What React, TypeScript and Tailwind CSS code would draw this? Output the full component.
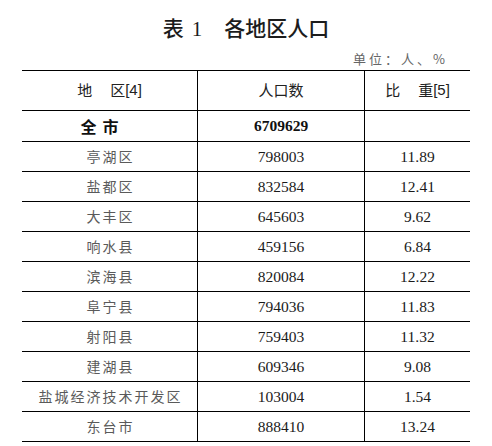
const rows: [string, string, string][] = [
  ["亭湖区", "798003", "11.89"],
  ["盐都区", "832584", "12.41"],
  ["大丰区", "645603", "9.62"],
  ["响水县", "459156", "6.84"],
  ["滨海县", "820084", "12.22"],
  ["阜宁县", "794036", "11.83"],
  ["射阳县", "759403", "11.32"],
  ["建湖县", "609346", "9.08"],
  ["盐城经济技术开发区", "103004", "1.54"],
  ["东台市", "888410", "13.24"],
];

const cjk = "font-['Noto_Sans_CJK_SC',sans-serif]";
const serif = "font-['Liberation_Serif','Noto_Sans_CJK_SC',serif]";
const grid = "grid grid-cols-[175px_167px_106px] border-b border-black";

export default function App() {
  return (
    <div className="h-[446px] w-[492px] bg-white px-[22px]">
      <h1
        className={`mt-[14px] text-center text-[21px] leading-[26px] font-medium text-[#1c1c1c] ${cjk}`}
      >
        表<span className={`ml-[8px] mr-[22px] font-normal ${serif}`}>1</span>各地区人口
      </h1>
      <div
        className={`mt-[9px] pr-[22px] text-right text-[13px] leading-[16px] tracking-[3px] text-[#666] ${cjk}`}
      >
        单位：人、%
      </div>

      <div className="mt-[3px] border-t border-black">
        {/* 表头 */}
        <div className={`${grid} h-[40px] text-[15px] text-[#222]`}>
          <div className={`flex items-center justify-center ${cjk}`}>
            地<span className="w-[18px]" />区<span className="font-['Liberation_Sans',sans-serif]">[4]</span>
          </div>
          <div className={`flex items-center justify-center border-l border-black ${cjk}`}>人口数</div>
          <div className={`flex items-center justify-center border-l border-black ${cjk}`}>
            比<span className="w-[18px]" />重<span className="font-['Liberation_Sans',sans-serif]">[5]</span>
          </div>
        </div>

        {/* 全市 */}
        <div className={`${grid} h-[31px] text-[#111]`}>
          <div className={`flex items-center justify-center pr-[20px] text-[16px] font-bold ${cjk}`}>
            全<span className="w-[6px]" />市
          </div>
          <div
            className={`flex items-center justify-center border-l border-black text-[15.5px] font-bold ${serif}`}
          >
            6709629
          </div>
          <div className="border-l border-black" />
        </div>

        {rows.map(([name, pop, pct]) => (
          <div key={name} className={`${grid} h-[30px]`}>
            <div
              className={`flex items-center justify-center pl-[2px] text-[14px] tracking-[2px] text-[#5a5a5a] ${cjk}`}
            >
              {name}
            </div>
            <div
              className={`flex items-center justify-center border-l border-black text-[15.5px] text-[#1a1a1a] ${serif}`}
            >
              {pop}
            </div>
            <div
              className={`flex items-center justify-center border-l border-black text-[15.5px] text-[#1a1a1a] ${serif}`}
            >
              {pct}
            </div>
          </div>
        ))}
      </div>
    </div>
  );
}
